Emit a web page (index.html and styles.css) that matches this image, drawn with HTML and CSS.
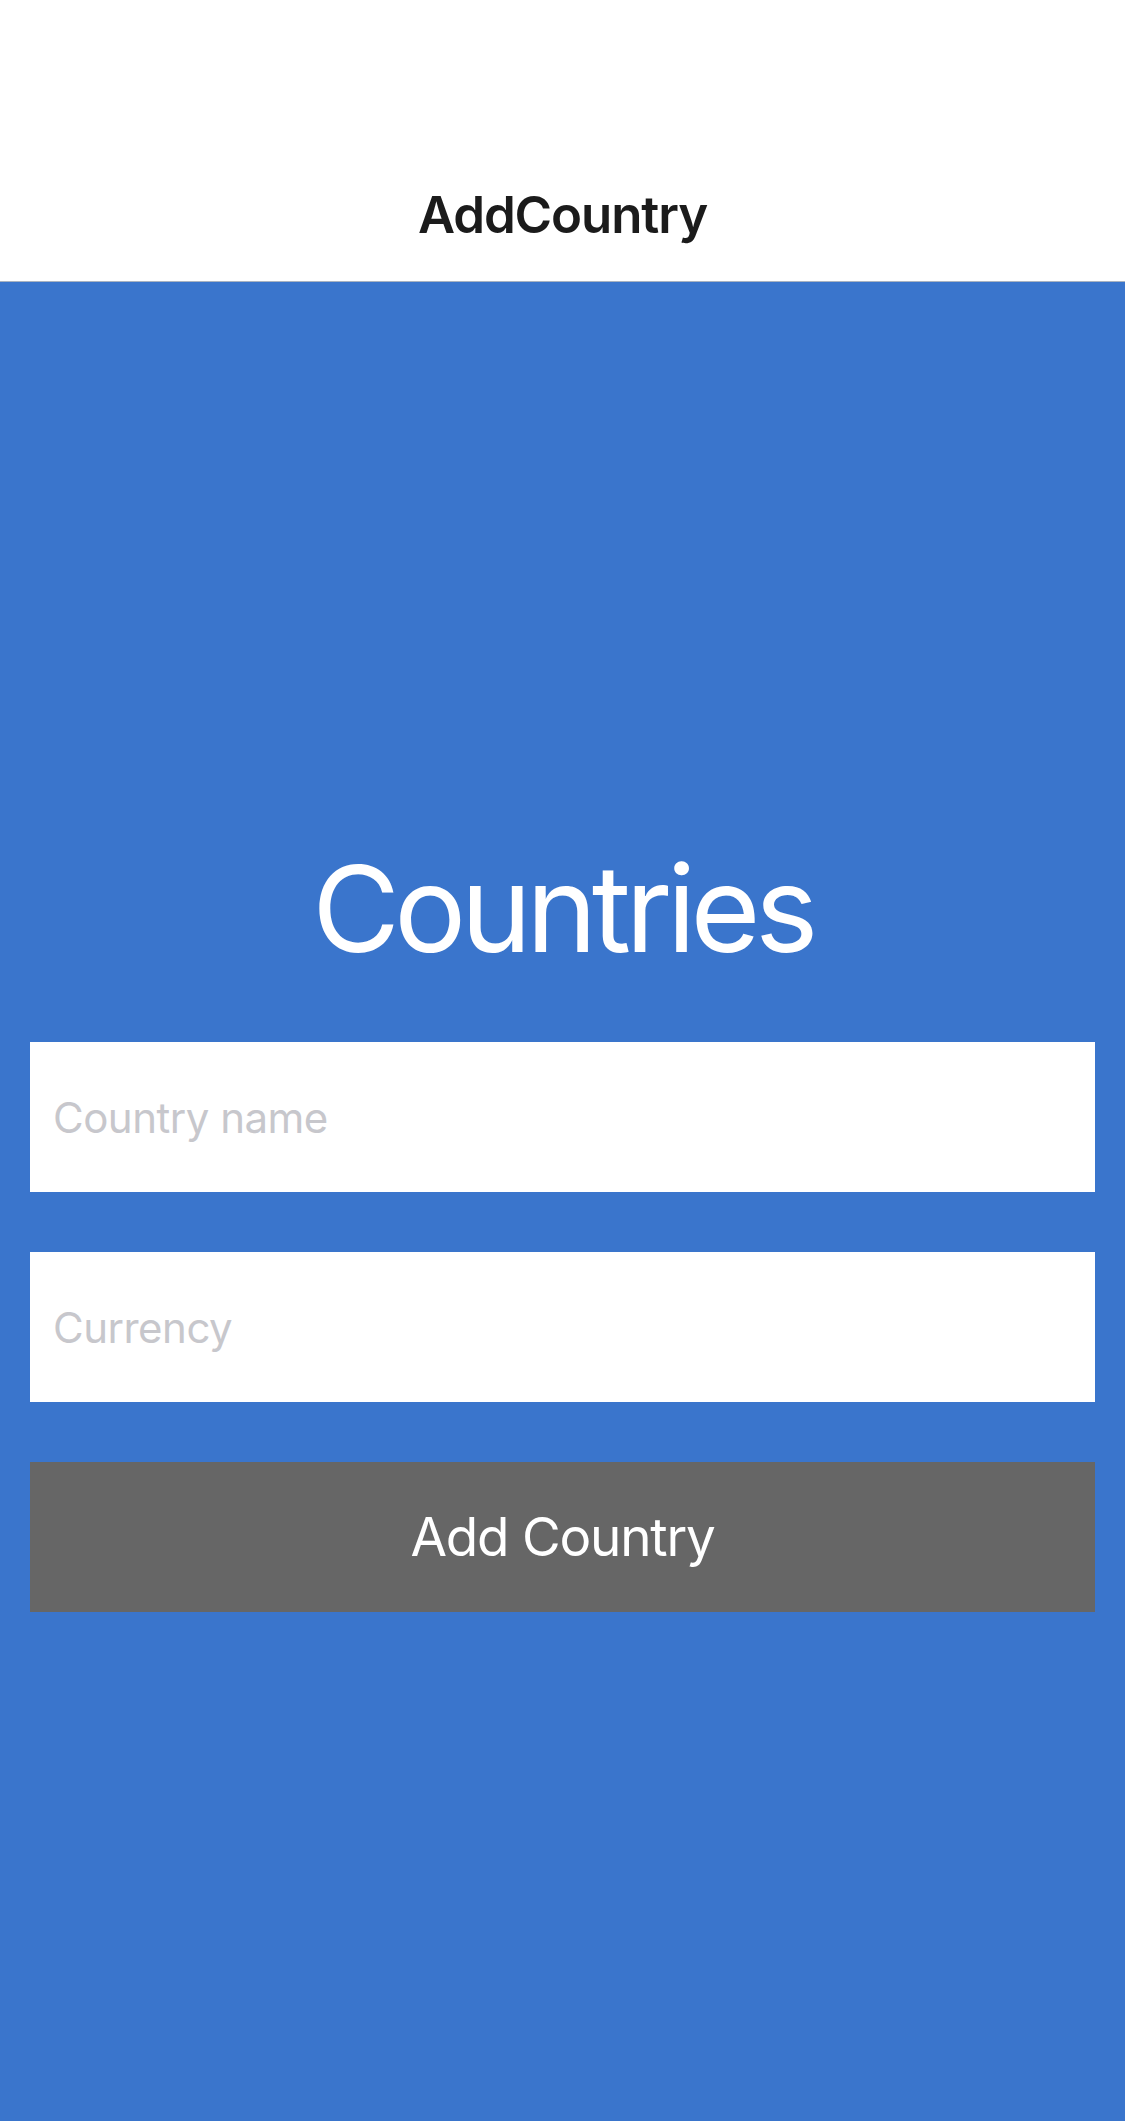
FILE: index.html
```html
<!DOCTYPE html>
<html lang="en">
<head>
<meta charset="utf-8">
<title>AddCountry</title>
<link rel="stylesheet" href="styles.css">
</head>
<body>
<div class="screen">
  <header class="navbar">
    <h1 class="nav-title">AddCountry</h1>
  </header>
  <main class="content">
    <h2 class="heading">Countries</h2>
    <form class="form">
      <input class="field" type="text" placeholder="Country name">
      <input class="field" type="text" placeholder="Currency">
      <button class="btn" type="button">Add Country</button>
    </form>
  </main>
</div>
</body>
</html>
```
FILE: styles.css
```css
html, body {
  margin: 0;
  padding: 0;
  height: 100%;
}
body {
  font-family: Inter, "Noto Sans", "Liberation Sans", sans-serif;
  background: #3a75cc;
}
.screen {
  display: flex;
  flex-direction: column;
  min-height: 2121px;
}
.navbar {
  background: #ffffff;
  height: 282px;
  box-sizing: border-box;
  padding-top: 185px;
  border-bottom: 1px solid #a9b3c0;
  display: flex;
  justify-content: center;
}
.nav-title {
  margin: 0;
  font-size: 51px;
  line-height: 60px;
  font-weight: 600;
  color: #1b1b1b;
  letter-spacing: -1.1px;
}
.content {
  flex: 1;
  background: #3a75cc;
  display: flex;
  flex-direction: column;
  align-items: stretch;
  padding: 557px 30px 0;
}
.heading {
  margin: 0 0 63px;
  text-align: center;
  font-size: 120px;
  line-height: 140px;
  font-weight: 400;
  color: #ffffff;
  letter-spacing: -5.5px;
}
.form {
  display: flex;
  flex-direction: column;
  gap: 60px;
}
.field {
  display: block;
  box-sizing: border-box;
  width: 100%;
  height: 150px;
  margin: 0;
  border: none;
  outline: none;
  border-radius: 0;
  background: #ffffff;
  padding: 0 23px;
  font-family: inherit;
  font-size: 42px;
  letter-spacing: -0.5px;
  color: #222222;
}
.field::placeholder {
  color: #c7c7cc;
  opacity: 1;
}
.btn {
  display: block;
  box-sizing: border-box;
  width: 100%;
  height: 150px;
  margin: 0;
  border: none;
  border-radius: 0;
  background: #666666;
  color: #ffffff;
  font-family: inherit;
  font-size: 53px;
  font-weight: 400;
  letter-spacing: -1.2px;
  cursor: pointer;
}
```
